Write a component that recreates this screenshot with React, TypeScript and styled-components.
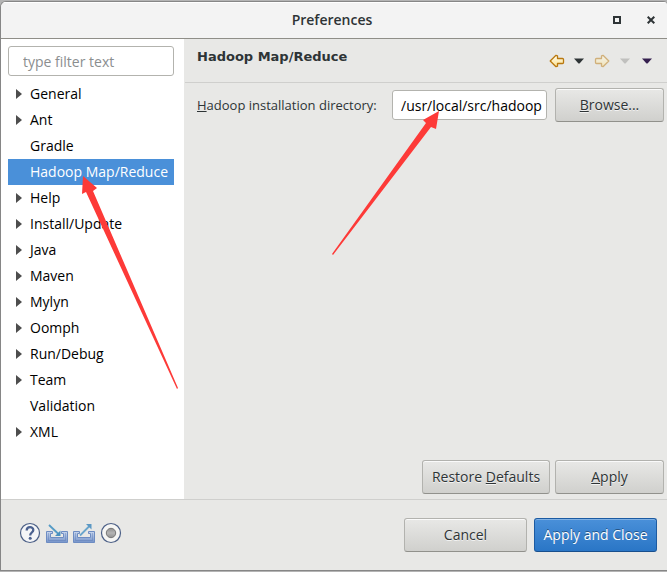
import React, { useState } from "react";
import styled, { createGlobalStyle, css } from "styled-components";

const GlobalStyle = createGlobalStyle`
  *, *::before, *::after { box-sizing: border-box; }
  body {
    margin: 0;
    background: #b4b4b4;
    color: #2e3436;
    font-family: "Open Sans", "Noto Sans", sans-serif;
    font-size: 14px;
    line-height: 20px;
  }
  button, input { font: inherit; color: inherit; }
`;

const Dialog = styled.div`
  position: relative;
  display: flex;
  flex-direction: column;
  min-height: calc(100vh - 2px);
  margin: 1px 0;
  border: 1px solid #868686;
  border-right: 0;
  border-radius: 6px 4px 0 0;
  background: #e8e8e6;
  overflow: hidden;
`;

const TitleBar = styled.header`
  display: grid;
  grid-template-columns: 1fr auto 1fr;
  align-items: center;
  height: 37px;
  padding-right: 4px;
  border-top: 1px solid #fff;
  border-bottom: 1px solid #8f8e88;
  background: #f3f3f3;
`;

const Title = styled.h1`
  grid-column: 2;
  margin: 0;
  font-size: 14px;
  font-weight: 600;
  line-height: 18px;
  padding-bottom: 2px;
`;

const WindowControls = styled.div`
  display: flex;
  justify-content: flex-end;
  gap: 14px;
  padding: 0 2px 2px 0;
`;

const IconButton = styled.button<{ $width: number }>`
  display: flex;
  align-items: center;
  justify-content: center;
  width: ${(p) => p.$width}px;
  height: 20px;
  padding: 0;
  border: 0;
  background: none;
  svg { flex: none; display: block; }
`;

const Body = styled.div`
  display: flex;
  flex: 1;
`;

const Sidebar = styled.nav`
  flex: none;
  width: 183px;
  padding: 7px 10px 0 7px;
  background: #fff;
`;

const fieldStyle = css`
  height: 30px;
  border: 1px solid #b3b3ae;
  border-radius: 3px;
  background: #fff;
`;

const FilterInput = styled.input`
  ${fieldStyle}
  display: block;
  width: 100%;
  padding: 0 14px;
  &::placeholder { color: #8b8e8f; opacity: 1; }
`;

const Tree = styled.ul`
  margin: 5px 0 0;
  padding: 0;
  list-style: none;
`;

const TreeRow = styled.button<{ $selected: boolean }>`
  display: flex;
  align-items: center;
  width: 100%;
  height: 26px;
  padding: 0 0 0 8px;
  border: 0;
  background: ${(p) => (p.$selected ? "#4a90d9" : "transparent")};
  color: ${(p) => (p.$selected ? "#fff" : "#000")};
  text-align: left;
  white-space: nowrap;
`;

const Expander = styled.span`
  display: flex;
  flex: none;
  width: 14px;
`;

const Page = styled.main`
  display: flex;
  flex: 1;
  flex-direction: column;
  min-width: 0;
  padding-left: 1px;
`;

const PageHeader = styled.div`
  display: flex;
  justify-content: space-between;
  height: 44px;
  padding: 8px 9px 0 12px;
  border-bottom: 1px solid #cfcfcd;
`;

const PageTitle = styled.h2`
  margin: 0;
  font-family: "DejaVu Sans", sans-serif;
  font-size: 13px;
  font-weight: 700;
`;

const History = styled.div`
  display: flex;
  padding-top: 4px;
`;

const FieldRow = styled.div`
  display: grid;
  grid-template-columns: auto minmax(155px, 1fr) auto;
  align-items: center;
  gap: 8px;
  padding: 5px 3px 0 12px;
`;

const FieldLabel = styled.label`
  min-width: 187px;
  font-size: 13px;
  white-space: nowrap;
`;

const PathInput = styled.input`
  ${fieldStyle}
  width: 100%;
  padding: 0 2px 0 8px;
  color: #000;
`;

const Button = styled.button<{ $width: number; $primary?: boolean }>`
  flex: none;
  width: ${(p) => p.$width}px;
  height: 34px;
  padding: 0;
  border: 1px solid ${(p) => (p.$primary ? "#1c5ba2" : "#b2b2ae")};
  border-bottom-color: ${(p) => (p.$primary ? "#184f8d" : "#91918c")};
  border-radius: 3px;
  background: ${(p) =>
    p.$primary
      ? "linear-gradient(#4a90d9, #2a76c6)"
      : "linear-gradient(#e8e8e6, #d0d0cd)"};
  box-shadow: inset 0 1px ${(p) => (p.$primary ? "#80b1e4" : "#fafafa")};
  color: ${(p) => (p.$primary ? "#fff" : "#2e3436")};
  text-shadow: ${(p) => (p.$primary ? "0 -1px rgba(0, 0, 0, 0.4)" : "0 1px rgba(255, 255, 255, 0.7)")};
  white-space: nowrap;
`;

const PageActions = styled.div`
  display: flex;
  justify-content: flex-end;
  gap: 5px;
  margin-top: auto;
  padding: 0 3px 5px;
`;

const Footer = styled.footer`
  display: flex;
  align-items: center;
  justify-content: space-between;
  height: 71px;
  padding: 0 10px 0 18px;
  border-top: 1px solid #cfcfcd;
`;

const FooterIcons = styled.div`
  display: flex;
  gap: 5px;
  padding-bottom: 4px;
`;

const FooterActions = styled.div`
  display: flex;
  gap: 7px;
`;

const Annotations = styled.svg`
  position: absolute;
  top: -2px;
  left: -1px;
  width: 667px;
  height: 572px;
  pointer-events: none;
`;

const ITEMS = [
  { name: "General", branch: true },
  { name: "Ant", branch: true },
  { name: "Gradle", branch: false },
  { name: "Hadoop Map/Reduce", branch: false },
  { name: "Help", branch: true },
  { name: "Install/Update", branch: true },
  { name: "Java", branch: true },
  { name: "Maven", branch: true },
  { name: "Mylyn", branch: true },
  { name: "Oomph", branch: true },
  { name: "Run/Debug", branch: true },
  { name: "Team", branch: true },
  { name: "Validation", branch: false },
  { name: "XML", branch: true },
];

function HistoryArrow({ forward }: { forward?: boolean }) {
  const id = forward ? "goldForward" : "goldBack";
  return (
    <svg width="16" height="14" viewBox="0 0 16 14" opacity={forward ? 0.5 : 1}>
      <defs>
        <linearGradient id={id} x1="0" y1="0" x2="0" y2="1">
          <stop offset="0" stopColor="#fffdf0" />
          <stop offset="1" stopColor="#fbe08c" />
        </linearGradient>
      </defs>
      <path
        d="M1.2 7 7 1.3 8.500 1.800V4.500H13.500Q14.500 4.500 14.500 5.500V8.500Q14.500 9.500 13.500 9.500H8.500V12.200L7 12.700Z"
        transform={forward ? "translate(16 0) scale(-1 1)" : undefined}
        fill={`url(#${id})`}
        stroke="#b9780f"
        strokeWidth="1.300"
        strokeLinejoin="round"
      />
    </svg>
  );
}

function DownTriangle({ color }: { color: string }) {
  return (
    <svg width="10" height="6" viewBox="0 0 10 6">
      <path d="M0 .5H10L5.500 5.500H4.500Z" fill={color} />
    </svg>
  );
}

function TrayIcon({ outgoing }: { outgoing?: boolean }) {
  const id = outgoing ? "trayOut" : "trayIn";
  return (
    <svg width="22" height="20" viewBox="0 0 22 20">
      <defs>
        <linearGradient id={id} x1="0" y1="0" x2="0" y2="1">
          <stop offset="0" stopColor="#c7d6ee" />
          <stop offset="1" stopColor="#7593c9" />
        </linearGradient>
      </defs>
      <path
        d="M.5 8.500H6.500V10.500H4.500V14.500H17.500V10.500H15.500V8.500H21.500V19.500H.5Z"
        fill={`url(#${id})`}
        stroke="#6d8cc2"
      />
      <path d="M2.500 10V17.500H19.500V10" fill="none" stroke="#4b6dab" opacity=".35" />
      {outgoing ? (
        <g stroke="#6aa5cc" fill="#5b98c4">
          <path d="M7 12.500 16.500 3" strokeWidth="1.800" />
          <path d="M13 1H18.500V6.500Z" stroke="none" />
        </g>
      ) : (
        <g stroke="#559bc6" fill="#4a90bf">
          <path d="M3 2 13 11.500" strokeWidth="1.800" />
          <path d="M14.500 7.500V13H9Z" stroke="none" />
        </g>
      )}
    </svg>
  );
}

function HelpIcon() {
  return (
    <svg width="22" height="22" viewBox="0 0 22 22">
      <circle cx="11" cy="11" r="9.500" fill="#f4f5f7" stroke="#4b5f86" strokeWidth="1.200" />
      <path
        d="M7.700 8.500C7.700 4.200 14.300 4.200 14.300 7.900C14.300 10.400 11.200 10.600 11.200 13.400"
        fill="none"
        stroke="#4b618f"
        strokeWidth="2.300"
      />
      <circle cx="11.200" cy="16.300" r="1.500" fill="#4b618f" />
    </svg>
  );
}

function RecordIcon() {
  return (
    <svg width="22" height="22" viewBox="0 0 22 22">
      <defs>
        <linearGradient id="recordDot" x1="0" y1="0" x2="0" y2="1">
          <stop offset="0" stopColor="#8f8f8f" />
          <stop offset=".5" stopColor="#b5b5b5" />
          <stop offset="1" stopColor="#8f8f8f" />
        </linearGradient>
      </defs>
      <circle cx="11" cy="11" r="9.500" fill="#f6f6f4" stroke="#4b5f86" strokeWidth="1.200" />
      <circle cx="11" cy="11" r="4.700" fill="url(#recordDot)" stroke="#777" />
    </svg>
  );
}

export default function App() {
  const [selected, setSelected] = useState("Hadoop Map/Reduce");

  return (
    <>
      <GlobalStyle />
      <Dialog role="dialog" aria-labelledby="dialog-title">
        <TitleBar>
          <Title id="dialog-title">Preferences</Title>
          <WindowControls>
            <IconButton $width={20} aria-label="Maximize">
              <svg width="8" height="8" viewBox="0 0 8 8">
                <path d="M1 1H7V7H1Z" fill="none" stroke="#2e3436" strokeWidth="2" />
              </svg>
            </IconButton>
            <IconButton $width={20} aria-label="Close">
              <svg width="8" height="8" viewBox="0 0 8 8">
                <path d="M.7 .7 7.300 7.300M7.300 .7 .7 7.300" stroke="#2e3436" strokeWidth="2" />
              </svg>
            </IconButton>
          </WindowControls>
        </TitleBar>

        <Body>
          <Sidebar aria-label="Preference pages">
            <FilterInput type="text" placeholder="type filter text" aria-label="Filter" />
            <Tree>
              {ITEMS.map(({ name, branch }) => (
                <li key={name}>
                  <TreeRow
                    $selected={name === selected}
                    aria-current={name === selected}
                    onClick={() => setSelected(name)}
                  >
                    <Expander>
                      {branch && (
                        <svg width="6" height="10" viewBox="0 0 6 10">
                          <path d="M0 0 6 5 0 10Z" fill="#4d4d4d" />
                        </svg>
                      )}
                    </Expander>
                    {name}
                  </TreeRow>
                </li>
              ))}
            </Tree>
          </Sidebar>

          <Page>
            <PageHeader>
              <PageTitle>Hadoop Map/Reduce</PageTitle>
              <History>
                <IconButton $width={22} aria-label="Back"><HistoryArrow /></IconButton>
                <IconButton $width={22} aria-label="Back history"><DownTriangle color="#2e3436" /></IconButton>
                <IconButton $width={24} aria-label="Forward" disabled><HistoryArrow forward /></IconButton>
                <IconButton $width={22} aria-label="Forward history" disabled><DownTriangle color="#c0c0be" /></IconButton>
                <IconButton $width={22} aria-label="Menu"><DownTriangle color="#35204f" /></IconButton>
              </History>
            </PageHeader>
            <FieldRow>
              <FieldLabel htmlFor="install-dir"><u>H</u>adoop installation directory:</FieldLabel>
              <PathInput id="install-dir" type="text" defaultValue="/usr/local/src/hadoop" />
              <Button $width={109}><u>B</u>rowse...</Button>
            </FieldRow>
            <PageActions>
              <Button $width={128}>Restore <u>D</u>efaults</Button>
              <Button $width={109}><u>A</u>pply</Button>
            </PageActions>
          </Page>
        </Body>

        <Footer>
          <FooterIcons>
            <IconButton $width={22} aria-label="Help"><HelpIcon /></IconButton>
            <IconButton $width={22} aria-label="Import"><TrayIcon /></IconButton>
            <IconButton $width={22} aria-label="Export"><TrayIcon outgoing /></IconButton>
            <IconButton $width={22} aria-label="Record"><RecordIcon /></IconButton>
          </FooterIcons>
          <FooterActions>
            <Button $width={123}>Cancel</Button>
            <Button $width={123} $primary>Apply and Close</Button>
          </FooterActions>
        </Footer>

        <Annotations viewBox="0 0 667 572" aria-hidden="true">
          <g fill="#fd3a38">
            <path d="M83 176 97 188 93 191 178 388 177 389 86 192 82 194Z" />
            <path d="M439 111 436 129 431 127 333 255 332 254 426 123 423 120Z" />
          </g>
        </Annotations>
      </Dialog>
    </>
  );
}
